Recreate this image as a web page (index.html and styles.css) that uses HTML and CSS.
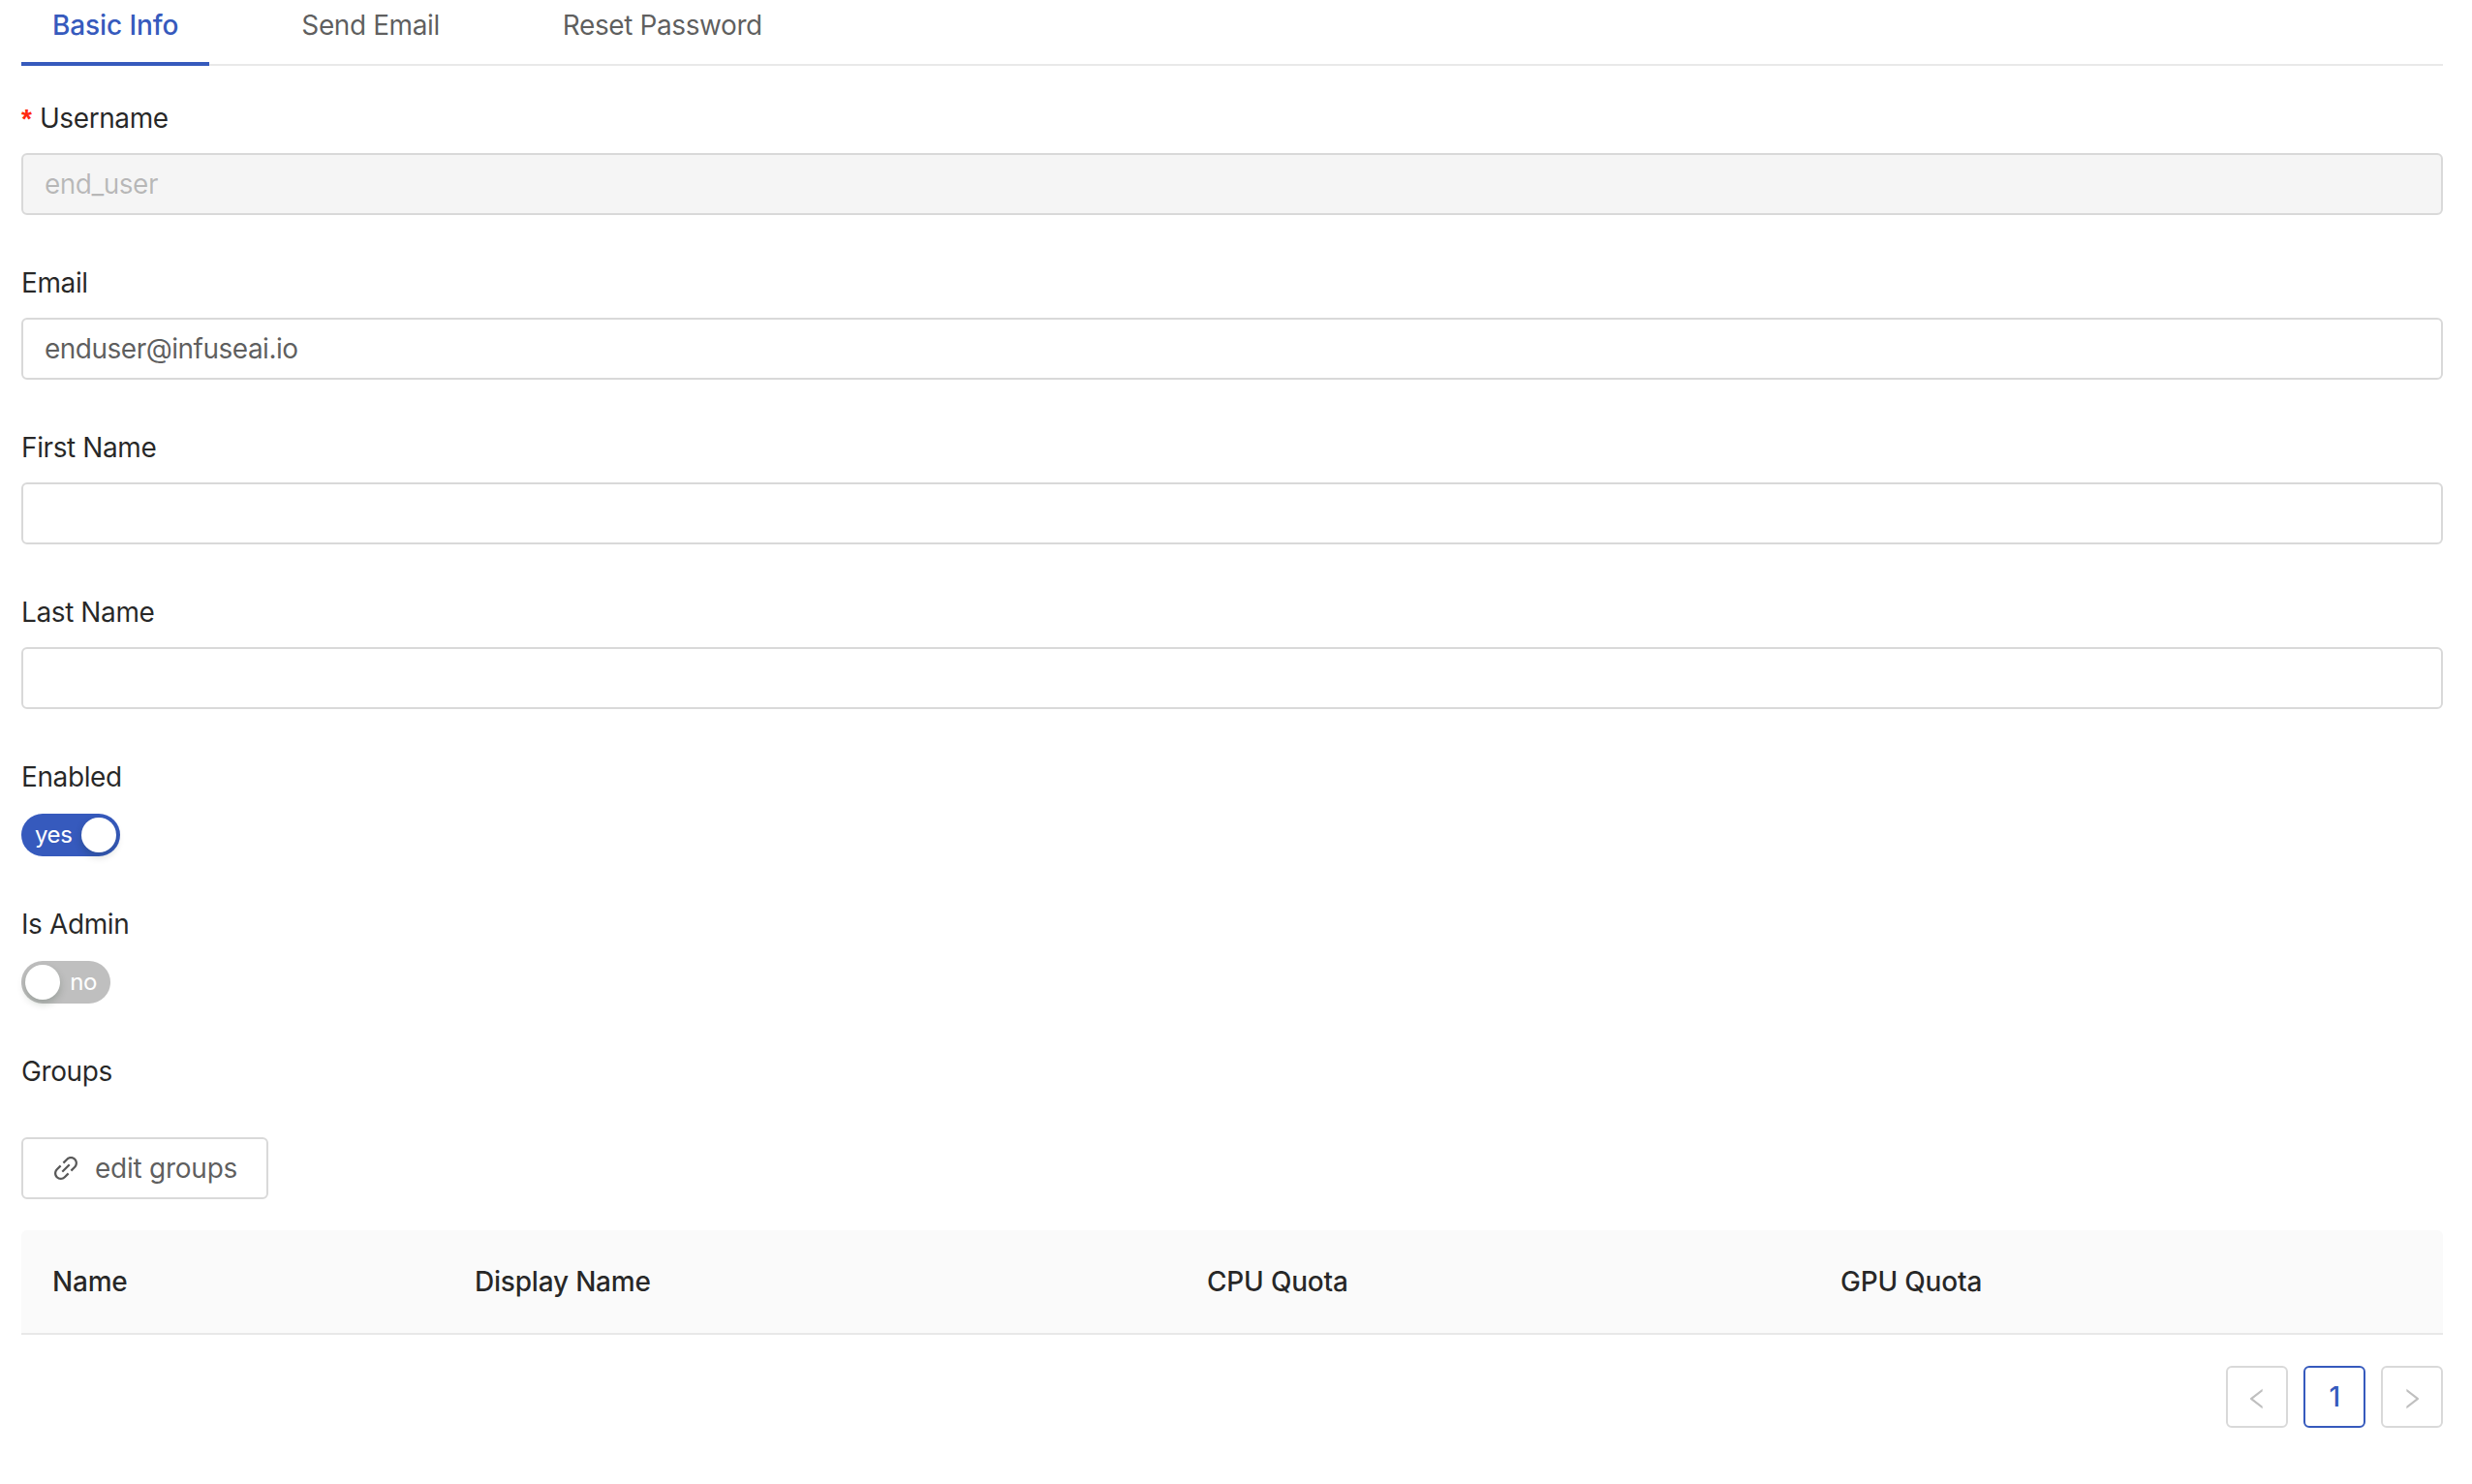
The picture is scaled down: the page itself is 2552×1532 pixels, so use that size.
FILE: index.html
```html
<!DOCTYPE html>
<html lang="en">
<head>
<meta charset="utf-8">
<title>User</title>
<link rel="stylesheet" href="styles.css">
</head>
<body>
<nav class="tabs">
  <a class="tab active">Basic Info</a>
  <a class="tab">Send Email</a>
  <a class="tab">Reset Password</a>
</nav>
<form class="form">
  <div class="item">
    <div class="label"><span class="req">*</span>Username</div>
    <div class="input disabled">end_user</div>
  </div>
  <div class="item">
    <div class="label">Email</div>
    <div class="input">enduser@infuseai.io</div>
  </div>
  <div class="item">
    <div class="label">First Name</div>
    <div class="input"></div>
  </div>
  <div class="item">
    <div class="label">Last Name</div>
    <div class="input"></div>
  </div>
  <div class="item">
    <div class="label">Enabled</div>
    <div class="switch on"><span class="switch-text">yes</span><span class="handle"></span></div>
  </div>
  <div class="item">
    <div class="label">Is Admin</div>
    <div class="switch off"><span class="handle"></span><span class="switch-text">no</span></div>
  </div>
  <div class="item groups">
    <div class="label">Groups</div>
    <div class="btn">
      <svg class="link-icon" viewBox="64 64 896 896" fill="currentColor"><path d="M574 665.4a8.03 8.03 0 00-11.3 0L446.5 781.6c-53.8 53.8-144.6 59.5-204 0-59.5-59.5-53.8-150.2 0-204l116.2-116.2c3.1-3.1 3.1-8.2 0-11.3l-39.8-39.8a8.03 8.03 0 00-11.3 0L191.4 526.5c-84.6 84.6-84.6 221.5 0 306s221.5 84.6 306 0l116.2-116.2c3.1-3.1 3.1-8.2 0-11.3L574 665.4zm258.6-474c-84.6-84.6-221.5-84.6-306 0L410.3 307.6a8.03 8.03 0 000 11.3l39.7 39.7c3.1 3.1 8.2 3.1 11.3 0l116.2-116.2c53.8-53.8 144.6-59.5 204 0 59.5 59.5 53.8 150.2 0 204L665.3 562.6a8.03 8.03 0 000 11.3l39.8 39.8c3.1 3.1 8.2 3.1 11.3 0l116.2-116.2c84.5-84.6 84.5-221.5 0-306.1zM610.1 372.3a8.03 8.03 0 00-11.3 0L372.3 598.7a8.03 8.03 0 000 11.3l39.6 39.6c3.1 3.1 8.2 3.1 11.3 0l226.4-226.4c3.1-3.1 3.1-8.2 0-11.3l-39.5-39.6z"/></svg>
      <span>edit groups</span>
    </div>
  </div>
</form>
<div class="thead">
  <div class="th">Name</div>
  <div class="th">Display Name</div>
  <div class="th">CPU Quota</div>
  <div class="th">GPU Quota</div>
</div>
<div class="pagination">
  <div class="page muted"><svg class="arrow" viewBox="64 64 896 896" fill="currentColor"><path d="M724 218.3V141c0-6.7-7.7-10.4-12.9-6.3L260.3 486.8a31.86 31.86 0 000 50.3l450.8 352.1c5.3 4.1 12.9.4 12.9-6.3v-77.3c0-4.9-2.3-9.6-6.1-12.6l-360-281 360-281.1c3.8-3 6.1-7.7 6.1-12.6z"/></svg></div>
  <div class="page current">1</div>
  <div class="page muted"><svg class="arrow" viewBox="64 64 896 896" fill="currentColor"><path d="M765.7 486.8L314.9 134.7A7.97 7.97 0 00302 141v77.3c0 4.9 2.3 9.6 6.1 12.6l360 281.1-360 281.1c-3.8 3-6.1 7.7-6.1 12.6V883c0 6.7 7.7 10.4 12.9 6.3l450.8-352.1a31.96 31.96 0 000-50.4z"/></svg></div>
</div>
</body>
</html>
```

FILE: styles.css
```css
* { box-sizing: border-box; }
html, body { margin: 0; background: #fff; }
body {
  padding: 0 30px 0 22px;
  font-family: Inter, "Liberation Sans", sans-serif;
  font-size: 28px;
  line-height: 44px;
  letter-spacing: -0.4px;
  color: rgba(0, 0, 0, 0.85);
}
.tabs {
  display: flex;
  gap: 63px;
  height: 68px;
  border-bottom: 2px solid #e9e9e9;
  margin-bottom: 32px;
}
.tab {
  height: 68px;
  padding: 4px 32px 0;
  color: rgba(0, 0, 0, 0.65);
}
.tab.active {
  color: #365abd;
  font-weight: 500;
  letter-spacing: -0.1px;
  border-bottom: 4px solid #365abd;
}
.form { display: flex; flex-direction: column; gap: 48px; }
.label { height: 44px; margin-bottom: 14px; }
.req {
  margin-right: 8px;
  color: #ff2a0d;
  font-family: "Liberation Sans", sans-serif;
  font-weight: 700;
  letter-spacing: 0;
}
.input {
  height: 64px;
  padding: 8px 22px;
  border: 2px solid #d9d9d9;
  border-radius: 6px;
  letter-spacing: -0.5px;
  color: rgba(0, 0, 0, 0.65);
}
.input.disabled { background: #f5f5f5; color: rgba(0, 0, 0, 0.25); }
.switch {
  display: inline-flex;
  align-items: center;
  height: 44px;
  margin-top: 2px;
  vertical-align: top;
  border-radius: 22px;
  color: #fff;
  font-size: 24px;
  line-height: 44px;
}
.switch.on { width: 102px; padding: 0 4px 0 14px; background: #365abd; justify-content: space-between; }
.switch.off { width: 92px; padding: 0 14px 0 4px; background: #bfbfbf; justify-content: space-between; }
.handle {
  width: 36px;
  height: 36px;
  border-radius: 50%;
  background: #fff;
  box-shadow: 0 4px 8px rgba(0, 35, 11, 0.2);
}
.btn {
  display: inline-flex;
  align-items: center;
  gap: 16px;
  height: 64px;
  margin: 32px 0 0;
  padding: 0 30px;
  border: 2px solid #d9d9d9;
  border-radius: 6px;
  letter-spacing: -0.25px;
  color: rgba(0, 0, 0, 0.65);
  vertical-align: top;
}
.link-icon { width: 28px; height: 28px; }
.thead {
  display: grid;
  grid-template-columns: 436px 756px 654px 654px;
  height: 108px;
  margin-top: 32px;
  background: #fafafa;
  border-bottom: 2px solid #e8e8e8;
  border-radius: 6px 6px 0 0;
}
.th { padding: 1px 32px 0; font-weight: 500; line-height: 105px; letter-spacing: -0.2px; }
.pagination { display: flex; justify-content: flex-end; gap: 16px; margin-top: 32px; height: 64px; }
.page {
  display: flex;
  align-items: center;
  justify-content: center;
  width: 64px;
  height: 64px;
  border: 2px solid #d9d9d9;
  border-radius: 6px;
}
.page.muted { color: rgba(0, 0, 0, 0.25); }
.page.current { border-color: #365abd; color: #365abd; font-weight: 500; }
.arrow { width: 24px; height: 24px; margin-top: 4px; }
```
